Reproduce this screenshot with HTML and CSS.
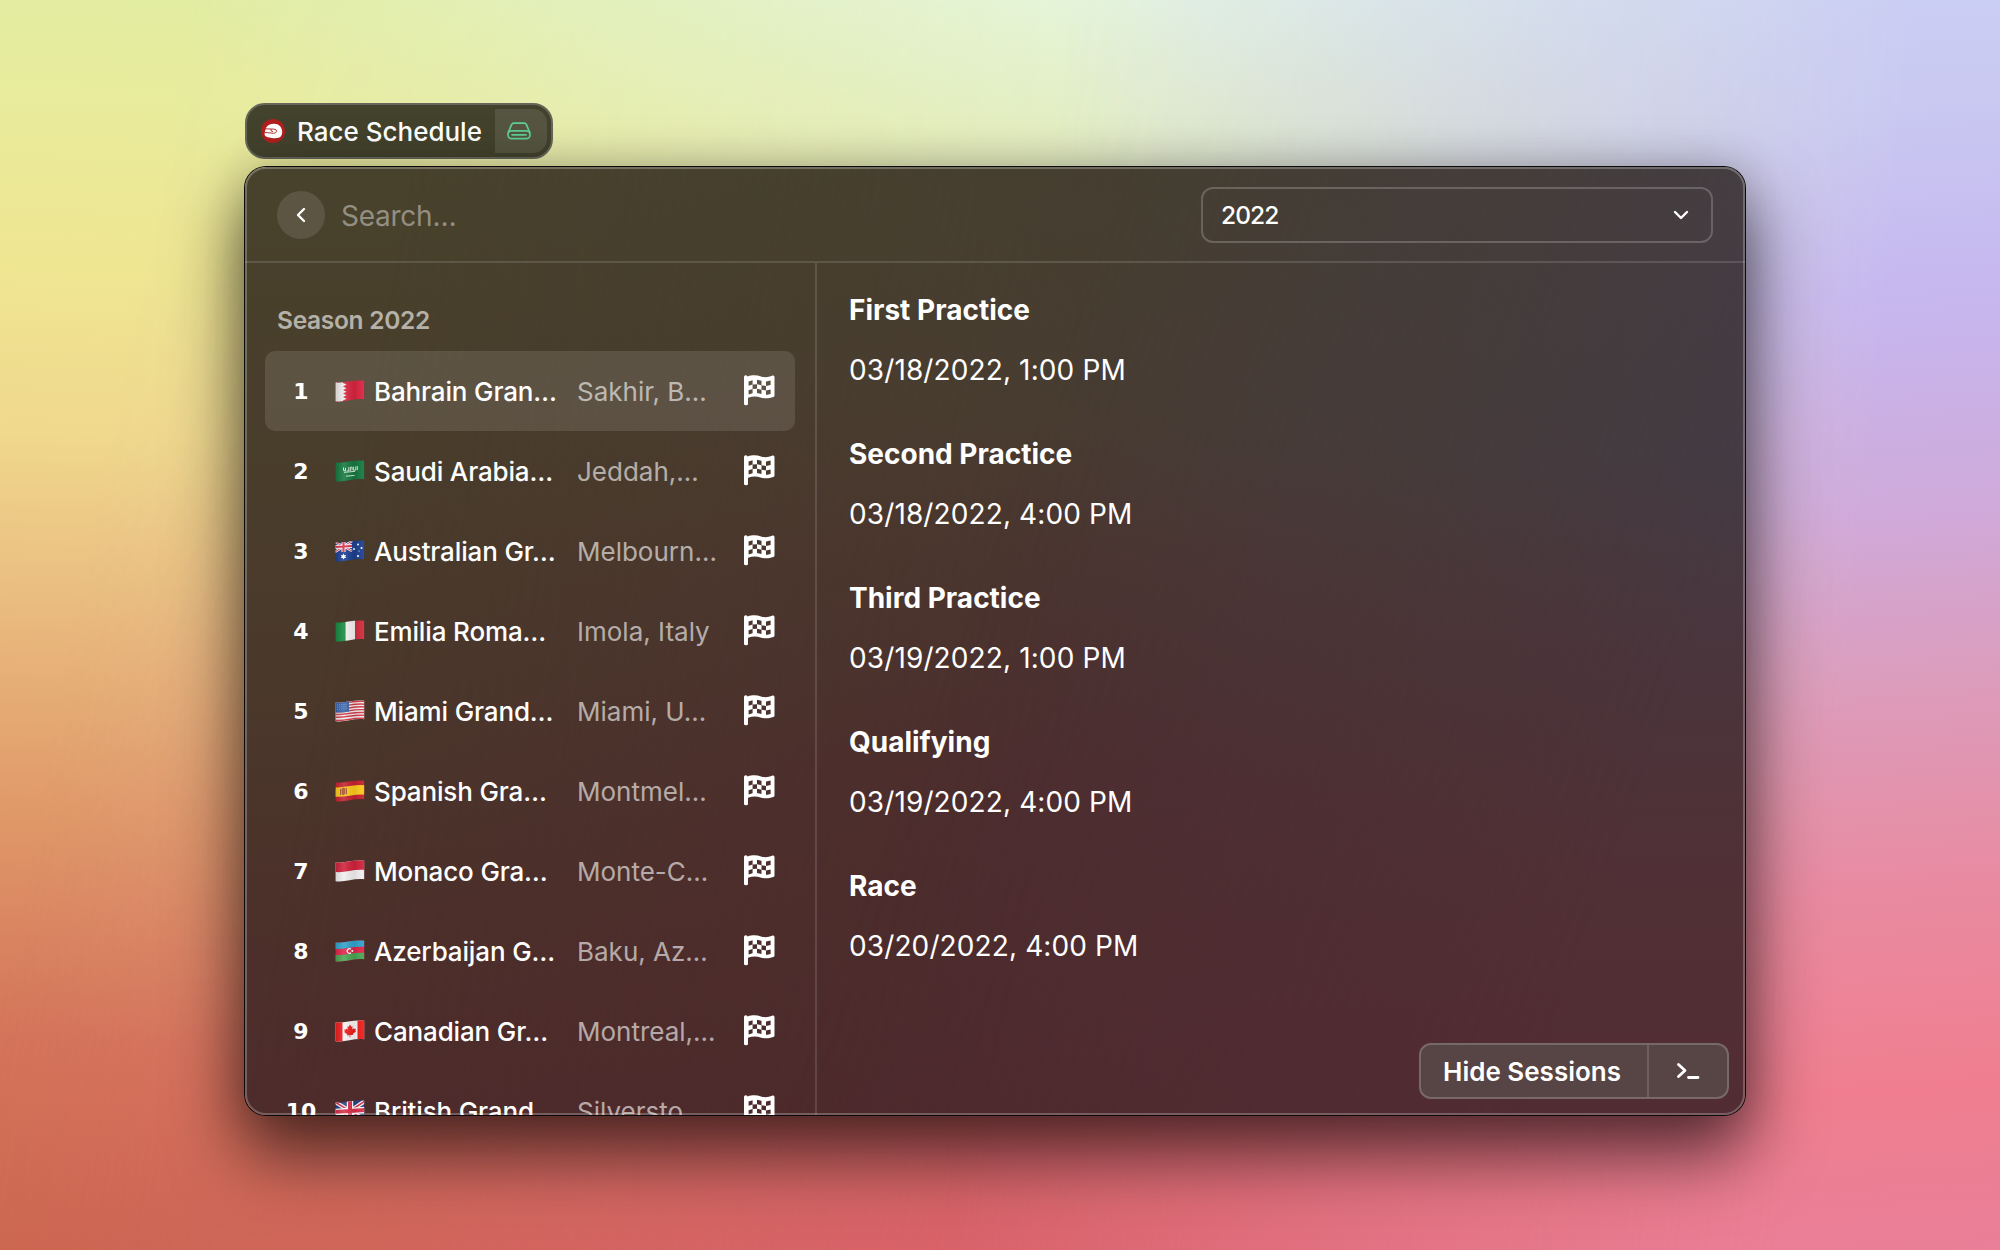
FILE: index.html
```
<!DOCTYPE html>
<html lang="en">
<head>
<meta charset="utf-8">
<title>Race Schedule</title>
<link rel="stylesheet" href="styles.css">
</head>
<body>
<svg class="sprite" aria-hidden="true">
  <defs>
    <clipPath id="wave"><path d="M.6 2.6C9 3.600 18-.4 29.200.8V19.200C18 18.200 10 22.400.6 21.200Z"/></clipPath>
    <linearGradient id="shade" x1="0" x2="1" y1="0" y2="0">
      <stop offset="0" stop-color="#000" stop-opacity=".12"/>
      <stop offset=".3" stop-color="#fff" stop-opacity=".12"/>
      <stop offset=".65" stop-color="#000" stop-opacity=".08"/>
      <stop offset=".93" stop-color="#fff" stop-opacity=".06"/>
      <stop offset="1" stop-color="#000" stop-opacity=".3"/>
    </linearGradient>
  </defs>
  <symbol id="checkered" viewBox="0 0 31 31">
    <path fill="#fff" fill-rule="evenodd" d="M0 1.800Q0 .3 1.700.3Q3 .3 3.600 1.400C9-.3 13 .2 17 1.400S24 2.400 28.500.5Q30.500 0 30.500 2V20.500Q30.500 21.600 29.300 22C24 24 20 23.400 16.500 22.400S8.500 21.200 4 22.800V29Q4 30.300 2 30.300T0 29Z
      M4.600 6.500l4-1.200v4.300l-4 1.200z M13 4.800l4.500 1v4.400l-4.500-1z M22 6.600l4.600-1v4.400l-4.600 1z
      M8.600 9.600l4.400-.4v4.500l-4.400.3z M17.500 10.200l4.500.8v4.500l-4.500-.8z
      M4.600 15.200l4-1.200v4.300l-4 1.200z M13 13.700l4.500 1v4.400l-4.500-1z M22 15.500l4.600-1v4.400l-4.600 1z"/>
  </symbol>
  <symbol id="bh" viewBox="0 0 30 22"><g clip-path="url(#wave)"><path fill="#d9233f" d="M0 0h30v22H0z"/><path fill="#eeeaea" d="M0 0H8v3l3.500 1.500L8 6.500l3.500 1.700L8 10l3.500 1.800L8 13.500l3.500 1.800L8 17l3.500 1.800L8 20.500V22H0z"/><path fill="url(#shade)" d="M0 0h30v22H0z"/></g></symbol>
  <symbol id="sa" viewBox="0 0 30 22"><g clip-path="url(#wave)"><path fill="#14783f" d="M0 0h30v22H0z"/><path fill="none" stroke="#d5e8d8" stroke-width="1" d="M8.500 7.500v3l2 .3v-3m1.300 3.200l2-.3V7m1.500 4V7.300l1.800-.2v3.200m1.500-3.700v3.800l2.200-.3V6.300m1.500-.2v4M9 12.300l11-.9M11 16.200l8.500-.8"/><path fill="url(#shade)" d="M0 0h30v22H0z"/></g></symbol>
  <symbol id="au" viewBox="0 0 30 22"><g clip-path="url(#wave)"><path fill="#1c3f91" d="M0 0h30v22H0z"/><path stroke="#fff" stroke-width="2.400" d="M0 2l17 9M0 12L17 1"/><path stroke="#d8304a" d="M0 2l17 9M0 12L17 1"/><path stroke="#fff" stroke-width="4" d="M8.500 0v12M0 7l17-1"/><path stroke="#d8304a" stroke-width="2.200" d="M8.500 0v12M0 7l17-1"/><path fill="#fff" d="M8.500 13.500l.8 1.700 1.900-.3-1 1.600 1 1.600-1.900-.2-.8 1.700-.8-1.700-1.900.2 1-1.600-1-1.600 1.900.3z"/><g fill="#fff"><circle cx="23" cy="4.500" r="1"/><circle cx="19" cy="9" r="1"/><circle cx="26.500" cy="8" r="1"/><circle cx="24" cy="11" r=".6"/><circle cx="23" cy="16" r="1.100"/></g><path fill="url(#shade)" d="M0 0h30v22H0z"/></g></symbol>
  <symbol id="it" viewBox="0 0 30 22"><g clip-path="url(#wave)"><path fill="#15893f" d="M0 0h10.500v22H0z"/><path fill="#f4f3f2" d="M10.500 0h9.500v22h-9.500z"/><path fill="#cf2b3b" d="M20 0h10v22H20z"/><path fill="url(#shade)" d="M0 0h30v22H0z"/></g></symbol>
  <symbol id="us" viewBox="0 0 30 22"><g clip-path="url(#wave)"><path fill="#f3efef" d="M0 0h30v22H0z"/><path fill="none" stroke="#d33a48" stroke-width="1.450" d="M0 3.200C10 4.200 18 .2 30 1.400M0 6C10 7 18 3 30 4.200M0 8.800C10 9.800 18 5.800 30 7M0 11.600C10 12.600 18 8.600 30 9.800M0 14.400C10 15.400 18 11.400 30 12.600M0 17.200C10 18.200 18 14.200 30 15.400M0 20.300C10 21.300 18 17.300 30 18.500"/><path fill="#3762a8" d="M0 0h14v11.400Q8 13 0 12.500z"/><path fill="none" stroke="#a9bfdf" stroke-width=".8" stroke-dasharray=".8 1.400" d="M2 5l11-.9M2 7.200l11-.9M2 9.400l11-.9"/><path fill="url(#shade)" d="M0 0h30v22H0z"/></g></symbol>
  <symbol id="es" viewBox="0 0 30 22"><g clip-path="url(#wave)"><path fill="#c4202f" d="M0 0h30v22H0z"/><path fill="none" stroke="#fbc91b" stroke-width="9.500" d="M0 12C10 13 18 9 30 10"/><path fill="#a9562a" d="M5 9l1-.3V15l-1 .3zM6.500 8.500l2-1 2 .7v5.500l-2 1.800-2-1.300zM11 8.200l1-.3v6.300l-1 .3z"/><path fill="url(#shade)" d="M0 0h30v22H0z"/></g></symbol>
  <symbol id="mc" viewBox="0 0 30 22"><g clip-path="url(#wave)"><path fill="#f1eff0" d="M0 0h30v22H0z"/><path fill="#d0213b" d="M0 0h30v10C18 9 10 13 0 12z"/><path fill="url(#shade)" d="M0 0h30v22H0z"/></g></symbol>
  <symbol id="az" viewBox="0 0 30 22"><g clip-path="url(#wave)"><path fill="#e02449" d="M0 0h30v22H0z"/><path fill="#2fa3cb" d="M0 0h30v7C18 6 10 10 0 8.800z"/><path fill="#4aa555" d="M0 22h30v-9C18 12 10 16 0 15z"/><path fill="none" stroke="#fff" stroke-width="1.200" d="M16 9.300a2.300 2.300 0 1 0 0 3.500"/><circle cx="17.300" cy="11" r="1" fill="#fff"/><path fill="url(#shade)" d="M0 0h30v22H0z"/></g></symbol>
  <symbol id="ca" viewBox="0 0 30 22"><g clip-path="url(#wave)"><path fill="#f8f5f4" d="M0 0h30v22H0z"/><path fill="#ee1c1c" d="M0 0h7.500v22H0zM22.500 0H30v22h-7.500zM15 4.500l1.300 2.300 1.300-.5-.5 3.300 1.700-1.500.4 1 1.800-.3-.7 1.800.8.600-3.300 2.700.2 1.200-2.600-.2v2.300h-.8v-2.200l-2.600.5.200-1.200L9 11.900l.8-.7-.7-1.700 1.800-.1.300-1 1.700 1.200-.5-3.200 1.300.4z"/><path fill="url(#shade)" d="M0 0h30v22H0z"/></g></symbol>
  <symbol id="gb" viewBox="0 0 30 22"><g clip-path="url(#wave)"><path fill="#263f86" d="M0 0h30v22H0z"/><path stroke="#fff" stroke-width="4" d="M0 2l30 18M0 21L30 1"/><path stroke="#d8304a" stroke-width="1.600" d="M0 2l30 18M0 21L30 1"/><path stroke="#fff" stroke-width="6.500" d="M15 0v22M0 12l30-2"/><path stroke="#d8304a" stroke-width="4" d="M15 0v22M0 12l30-2"/><path fill="url(#shade)" d="M0 0h30v22H0z"/></g></symbol>
</svg>

<div class="desktop">
  <div class="desktop-center"></div>
  <div class="desktop-right"></div>
</div>

<main class="stage">
  <div class="pill">
    <svg class="pill-logo" viewBox="0 0 24 24"><circle cx="12" cy="12" r="12" fill="#b0201f"/><path fill="#fff" d="M5 8.800C6.500 6 9.500 4.800 13 4.800c4.800 0 8 3.200 8.200 7.800 0 2.600-.6 4.500-2 5.500-1.800 1.300-5.500 1.300-8.700.9-2.800-.4-5.500-1-6.300-1.900-.8-1.200-.8-3.500.8-8.300z"/><path fill="none" stroke="#b0201f" stroke-width=".9" d="M3.800 9.800l9.200.3q3 .4 2.600 2.400-.6 1.700-3 1.800l-8.800-.9M10 10v1.800l2 .8"/></svg>
    <span class="pill-title">Race Schedule</span>
    <span class="pill-badge"><svg viewBox="0 0 24 18" fill="none" stroke="#5fcf94" stroke-width="1.700" stroke-linejoin="round" stroke-linecap="round"><path d="M1.200 10.500L4.600 2.700Q5.200 1.200 6.800 1.200h10.400q1.600 0 2.200 1.500l3.400 7.800"/><rect x="1" y="8.800" width="22" height="7.800" rx="3.500"/><path d="M5 12.800h14"/></svg></span>
  </div>

  <section class="window">
    <div class="tint tint-center"></div>
    <div class="tint tint-right"></div>
    <header class="toolbar">
      <button class="back" aria-label="Back"><svg viewBox="0 0 10 16"><path d="M8 2L2 8l6 6"/></svg></button>
      <span class="search">Search…</span>
      <div class="select"><span>2022</span><svg viewBox="0 0 16 10"><path d="M2 2l6 6 6-6"/></svg></div>
    </header>
    <div class="content">
      <aside class="list">
        <h2 class="section-title">Season 2022</h2>
        <div class="row selected"><b class="num">1</b><svg class="flag"><use href="#bh"/></svg><span class="name">Bahrain Gran…</span><span class="place">Sakhir, B…</span><svg class="done"><use href="#checkered"/></svg></div>
        <div class="row"><b class="num">2</b><svg class="flag"><use href="#sa"/></svg><span class="name">Saudi Arabia…</span><span class="place">Jeddah,…</span><svg class="done"><use href="#checkered"/></svg></div>
        <div class="row"><b class="num">3</b><svg class="flag"><use href="#au"/></svg><span class="name">Australian Gr…</span><span class="place">Melbourn…</span><svg class="done"><use href="#checkered"/></svg></div>
        <div class="row"><b class="num">4</b><svg class="flag"><use href="#it"/></svg><span class="name">Emilia Roma…</span><span class="place">Imola, Italy</span><svg class="done"><use href="#checkered"/></svg></div>
        <div class="row"><b class="num">5</b><svg class="flag"><use href="#us"/></svg><span class="name">Miami Grand…</span><span class="place">Miami, U…</span><svg class="done"><use href="#checkered"/></svg></div>
        <div class="row"><b class="num">6</b><svg class="flag"><use href="#es"/></svg><span class="name">Spanish Gra…</span><span class="place">Montmel…</span><svg class="done"><use href="#checkered"/></svg></div>
        <div class="row"><b class="num">7</b><svg class="flag"><use href="#mc"/></svg><span class="name">Monaco Gra…</span><span class="place">Monte-C…</span><svg class="done"><use href="#checkered"/></svg></div>
        <div class="row"><b class="num">8</b><svg class="flag"><use href="#az"/></svg><span class="name">Azerbaijan G…</span><span class="place">Baku, Az…</span><svg class="done"><use href="#checkered"/></svg></div>
        <div class="row"><b class="num">9</b><svg class="flag"><use href="#ca"/></svg><span class="name">Canadian Gr…</span><span class="place">Montreal,…</span><svg class="done"><use href="#checkered"/></svg></div>
        <div class="row"><b class="num">10</b><svg class="flag"><use href="#gb"/></svg><span class="name">British Grand…</span><span class="place">Silversto…</span><svg class="done"><use href="#checkered"/></svg></div>
      </aside>
      <article class="detail">
        <h3>First Practice</h3><p>03/18/2022, 1:00 PM</p>
        <h3>Second Practice</h3><p>03/18/2022, 4:00 PM</p>
        <h3>Third Practice</h3><p>03/19/2022, 1:00 PM</p>
        <h3>Qualifying</h3><p>03/19/2022, 4:00 PM</p>
        <h3>Race</h3><p>03/20/2022, 4:00 PM</p>
      </article>
    </div>
    <div class="actions">
      <span class="action-main">Hide Sessions</span>
      <span class="action-more"><svg viewBox="0 0 24 18"><path d="M2.500 2.500L9 8.500l-6.500 6M12.500 15.500h9.500"/></svg></span>
    </div>
  </section>
</main>
</body>
</html>
```
FILE: styles.css
```
* { box-sizing: border-box; }

body {
  margin: 0;
  width: 2000px;
  height: 1250px;
  overflow: hidden;
  font-family: Inter, "Liberation Sans", sans-serif;
  color: #fff;
}

.sprite { position: absolute; width: 0; height: 0; }

/* wallpaper: three vertical ramps cross-faded left to right */
.desktop,
.desktop-center,
.desktop-right { position: absolute; inset: 0; }

.desktop {
  z-index: -1;
  background: linear-gradient(182deg, #dfeda6 0%, #e8ec9c 12%, #efe692 25%, #f0d88d 38%, #e9b97e 52%, #df9667 68%, #d4745a 84%, #cb6750 100%);
}
.desktop-center {
  background: linear-gradient(180deg, #e5f5e0 0%, #e3eec8 10%, #e2d6a8 35%, #d99a8c 65%, #da686a 88%, #d8626a 100%);
  mask-image: linear-gradient(100deg, transparent 8%, #000 54%);
}
.desktop-right {
  background: linear-gradient(176deg, #cbd2f5 0%, #c9c9f2 17%, #c6b7ef 31%, #cfaadb 46%, #dd9bb9 60%, #e98aa0 74%, #f07e90 88%, #e97f98 100%);
  mask-image: linear-gradient(96deg, transparent 50%, rgba(0, 0, 0, .55) 70%, #000 90%);
}

.stage { padding: 103px 0 0 245px; }

.pill {
  display: flex;
  align-items: center;
  width: 308px;
  height: 56px;
  padding: 0 4px 0 14px;
  border: 2px solid #66675a;
  border-radius: 20px;
  background: #42422d;
}
.pill-logo { width: 24px; height: 24px; }
.pill-title {
  width: 198px;
  margin-left: 12px;
  padding-top: 1px;
  font-size: 26px;
  font-weight: 500;
  line-height: 32px;
  white-space: nowrap;
}
.pill-badge {
  display: flex;
  align-items: center;
  justify-content: center;
  width: 52px;
  height: 44px;
  border-radius: 0 14px 14px 0;
  background: #555542;
}
.pill-badge svg { width: 24px; height: 18px; margin-right: 4px; }

.window {
  position: relative;
  display: flex;
  flex-direction: column;
  width: 1500px;
  height: 948px;
  margin-top: 8px;
  border-radius: 21px;
  background: linear-gradient(180deg, #48422c 0%, #493d2b 30%, #4a382b 55%, #4c302a 80%, #4e2c2c 100%);
  box-shadow: 0 0 0 1px #0c0a0a, 0 0 40px rgba(0, 0, 0, .16), 0 36px 70px 4px rgba(0, 0, 0, .62);
}
.window::after {
  content: "";
  position: absolute;
  inset: 0;
  border: 2px solid rgba(255, 255, 255, .24);
  border-radius: 21px;
  pointer-events: none;
}
.tint { position: absolute; inset: 0; border-radius: 21px; }
.tint-center {
  background: linear-gradient(185deg, #453f31 0%, #483c31 28%, #4b342f 44%, #4d2d2e 62%, #4c292b 100%);
  mask-image: linear-gradient(100deg, transparent 10%, #000 55%);
}
.tint-right {
  background: linear-gradient(180deg, #443d45 0%, #443b44 30%, #4b343b 55%, #503036 75%, #522c33 100%);
  mask-image: linear-gradient(110deg, transparent 48%, #000 88%);
}

.toolbar {
  position: relative;
  display: flex;
  align-items: center;
  height: 96px;
  padding: 2px 32px 0;
  border-bottom: 2px solid rgba(255, 255, 255, .13);
}
.back {
  display: flex;
  align-items: center;
  justify-content: center;
  width: 48px;
  height: 48px;
  padding: 0;
  border: 0;
  border-radius: 50%;
  background: rgba(255, 255, 255, .11);
}
.back svg { width: 10px; height: 16px; }
.back path,
.select path,
.action-more path {
  fill: none;
  stroke: #fff;
  stroke-width: 2.400;
  stroke-linecap: round;
  stroke-linejoin: round;
}
.search {
  flex: 1;
  margin-left: 16px;
  padding-top: 2px;
  font-size: 28px;
  letter-spacing: -.25px;
  line-height: 34px;
  color: rgba(255, 255, 255, .42);
}
.select {
  display: flex;
  align-items: center;
  justify-content: space-between;
  width: 512px;
  height: 56px;
  padding: 0 22px 0 18px;
  border: 2px solid rgba(255, 255, 255, .2);
  border-radius: 12px;
  font-size: 24.500px;
  font-weight: 500;
  letter-spacing: -.9px;
}
.select svg { width: 16px; height: 10px; }

.content { position: relative; display: flex; height: 852px; }
.list {
  width: 572px;
  height: 852px;
  padding: 42px 20px 0;
  overflow: hidden;
  border-right: 2px solid rgba(255, 255, 255, .13);
  border-bottom-left-radius: 21px;
}
.section-title {
  height: 46px;
  margin: 0;
  padding-left: 12px;
  font-size: 24.500px;
  font-weight: 600;
  letter-spacing: -.3px;
  line-height: 30px;
  color: rgba(255, 255, 255, .6);
}
.row {
  display: flex;
  align-items: center;
  height: 80px;
  padding: 0 20px 0 16px;
  border-radius: 10px;
  font-size: 26px;
  line-height: 32px;
  white-space: nowrap;
}
.row.selected { background: rgba(255, 255, 255, .11); }
.num {
  width: 40px;
  padding-top: 1px;
  text-align: center;
  font-family: "DejaVu Sans", sans-serif;
  font-size: 22px;
}
.flag { width: 30px; height: 22px; margin-left: 14px; }
.name {
  width: 203px;
  margin-left: 9px;
  padding-top: 2px;
  font-weight: 500;
  letter-spacing: -.15px;
}
.place { flex: 1; padding-top: 2px; color: rgba(255, 255, 255, .6); }
.done { width: 31px; height: 31px; margin-bottom: 1px; }

.detail { flex: 1; padding: 30px 33px 0 32px; font-size: 28px; line-height: 34px; }
.detail h3 { margin: 0 0 26px; font-size: 28px; font-weight: 700; line-height: 34px; }
.detail p { margin: 0 0 50px; letter-spacing: .12px; }

.actions {
  position: absolute;
  right: 16px;
  bottom: 16px;
  display: flex;
  width: 310px;
  height: 56px;
  border: 2px solid rgba(255, 255, 255, .2);
  border-radius: 12px;
  background: #574444;
}
.action-main {
  width: 226px;
  padding-left: 22px;
  font-size: 26px;
  font-weight: 600;
  line-height: 54px;
}
.action-more {
  display: flex;
  flex: 1;
  align-items: center;
  justify-content: center;
  border-left: 2px solid rgba(255, 255, 255, .15);
}
.action-more svg { width: 24px; height: 18px; }
.action-more path { stroke-width: 2.800; }
```
